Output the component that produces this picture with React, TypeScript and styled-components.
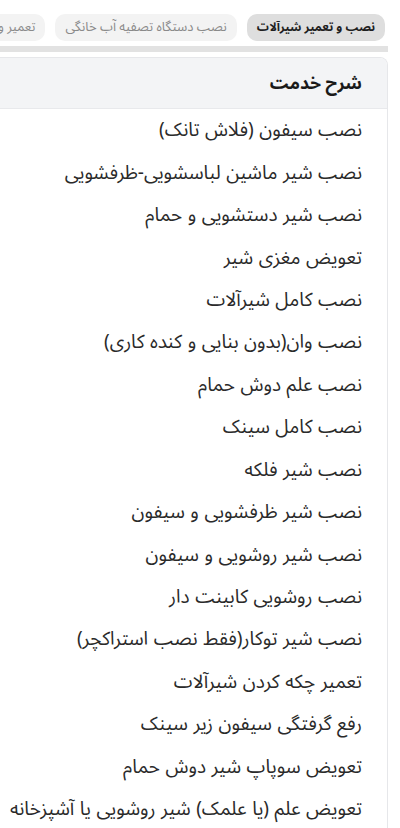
import styled, { createGlobalStyle } from "styled-components";

const GlobalStyle = createGlobalStyle`
    html, body {
        margin: 0;
        padding: 0;
        background: #ffffff;
        overflow: hidden;
    }
    * {
        box-sizing: border-box;
    }
`

const tabs = [
    "نصب و تعمیر شیرآلات",
    "نصب دستگاه تصفیه آب خانگی",
    "تعمیر و سرویس پکیج",
];

const services = [
    "نصب سیفون (فلاش تانک)",
    "نصب شیر ماشین لباسشویی-ظرفشویی",
    "نصب شیر دستشویی و حمام",
    "تعویض مغزی شیر",
    "نصب کامل شیرآلات",
    "نصب وان(بدون بنایی و کنده کاری)",
    "نصب علم دوش حمام",
    "نصب کامل سینک",
    "نصب شیر فلکه",
    "نصب شیر ظرفشویی و سیفون",
    "نصب شیر روشویی و سیفون",
    "نصب روشویی کابینت دار",
    "نصب شیر توکار(فقط نصب استراکچر)",
    "تعمیر چکه کردن شیرآلات",
    "رفع گرفتگی سیفون زیر سینک",
    "تعویض سوپاپ شیر دوش حمام",
    "تعویض علم (یا علمک) شیر روشویی یا آشپزخانه",
];

export default function App() {
    return (
        <Page>
            <GlobalStyle/>
            <TabBar>
                {tabs.map((t, i) => (
                    <Tab key={t} $active={i === 0}>{t}</Tab>
                ))}
            </TabBar>
            <ScrollTrack/>
            <Card>
                <CardHeader>شرح خدمت</CardHeader>
                <ServiceList>
                    {services.map((s) => (
                        <ServiceRow key={s}>{s}</ServiceRow>
                    ))}
                </ServiceList>
            </Card>
        </Page>
    );
}

const Page = styled.div`
    direction: rtl;
    width: 400px;
    height: 828px;
    overflow: hidden;
    padding-right: 12px;
    font-family: "Noto Sans Arabic", "Noto Sans", sans-serif;
    color: #222;
`

const TabBar = styled.div`
    display: flex;
    gap: 10px;
    padding-top: 14px;
    padding-right: 3px;
    white-space: nowrap;
`

const Tab = styled.div<{ $active?: boolean }>`
    flex-shrink: 0;
    height: 27px;
    line-height: 27px;
    padding: 0 10px;
    border-radius: 10px;
    font-size: ${(p) => (p.$active ? "12px" : "13px")};
    font-weight: ${(p) => (p.$active ? 700 : 400)};
    color: ${(p) => (p.$active ? "#1f1f1f" : "#8a8a8a")};
    background: ${(p) => (p.$active ? "#dedede" : "#f3f3f3")};
`

const ScrollTrack = styled.div`
    height: 6px;
    margin-top: 5px;
    margin-left: -12px;
    background: #e2e2e2;
    border-radius: 3px 0 0 3px;
`

const Card = styled.div`
    margin-top: 5px;
    margin-left: -20px;
    border: 1px solid #e6e7ea;
    border-left: none;
    border-radius: 0 8px 0 0;
    overflow: hidden;
`

const CardHeader = styled.div`
    height: 51px;
    display: flex;
    align-items: center;
    padding-right: 25px;
    background: #f3f4f6;
    border-bottom: 1px solid #e8e9ec;
    font-size: 17.5px;
    font-weight: 700;
    color: #1a1a1a;
`

const ServiceList = styled.div`
    display: flex;
    flex-direction: column;
`

const ServiceRow = styled.div`
    height: 42.45px;
    display: flex;
    align-items: center;
    padding-right: 25px;
    font-size: 19px;
    word-spacing: 0.6px;
    color: #2a2a2a;
    white-space: nowrap;
`
